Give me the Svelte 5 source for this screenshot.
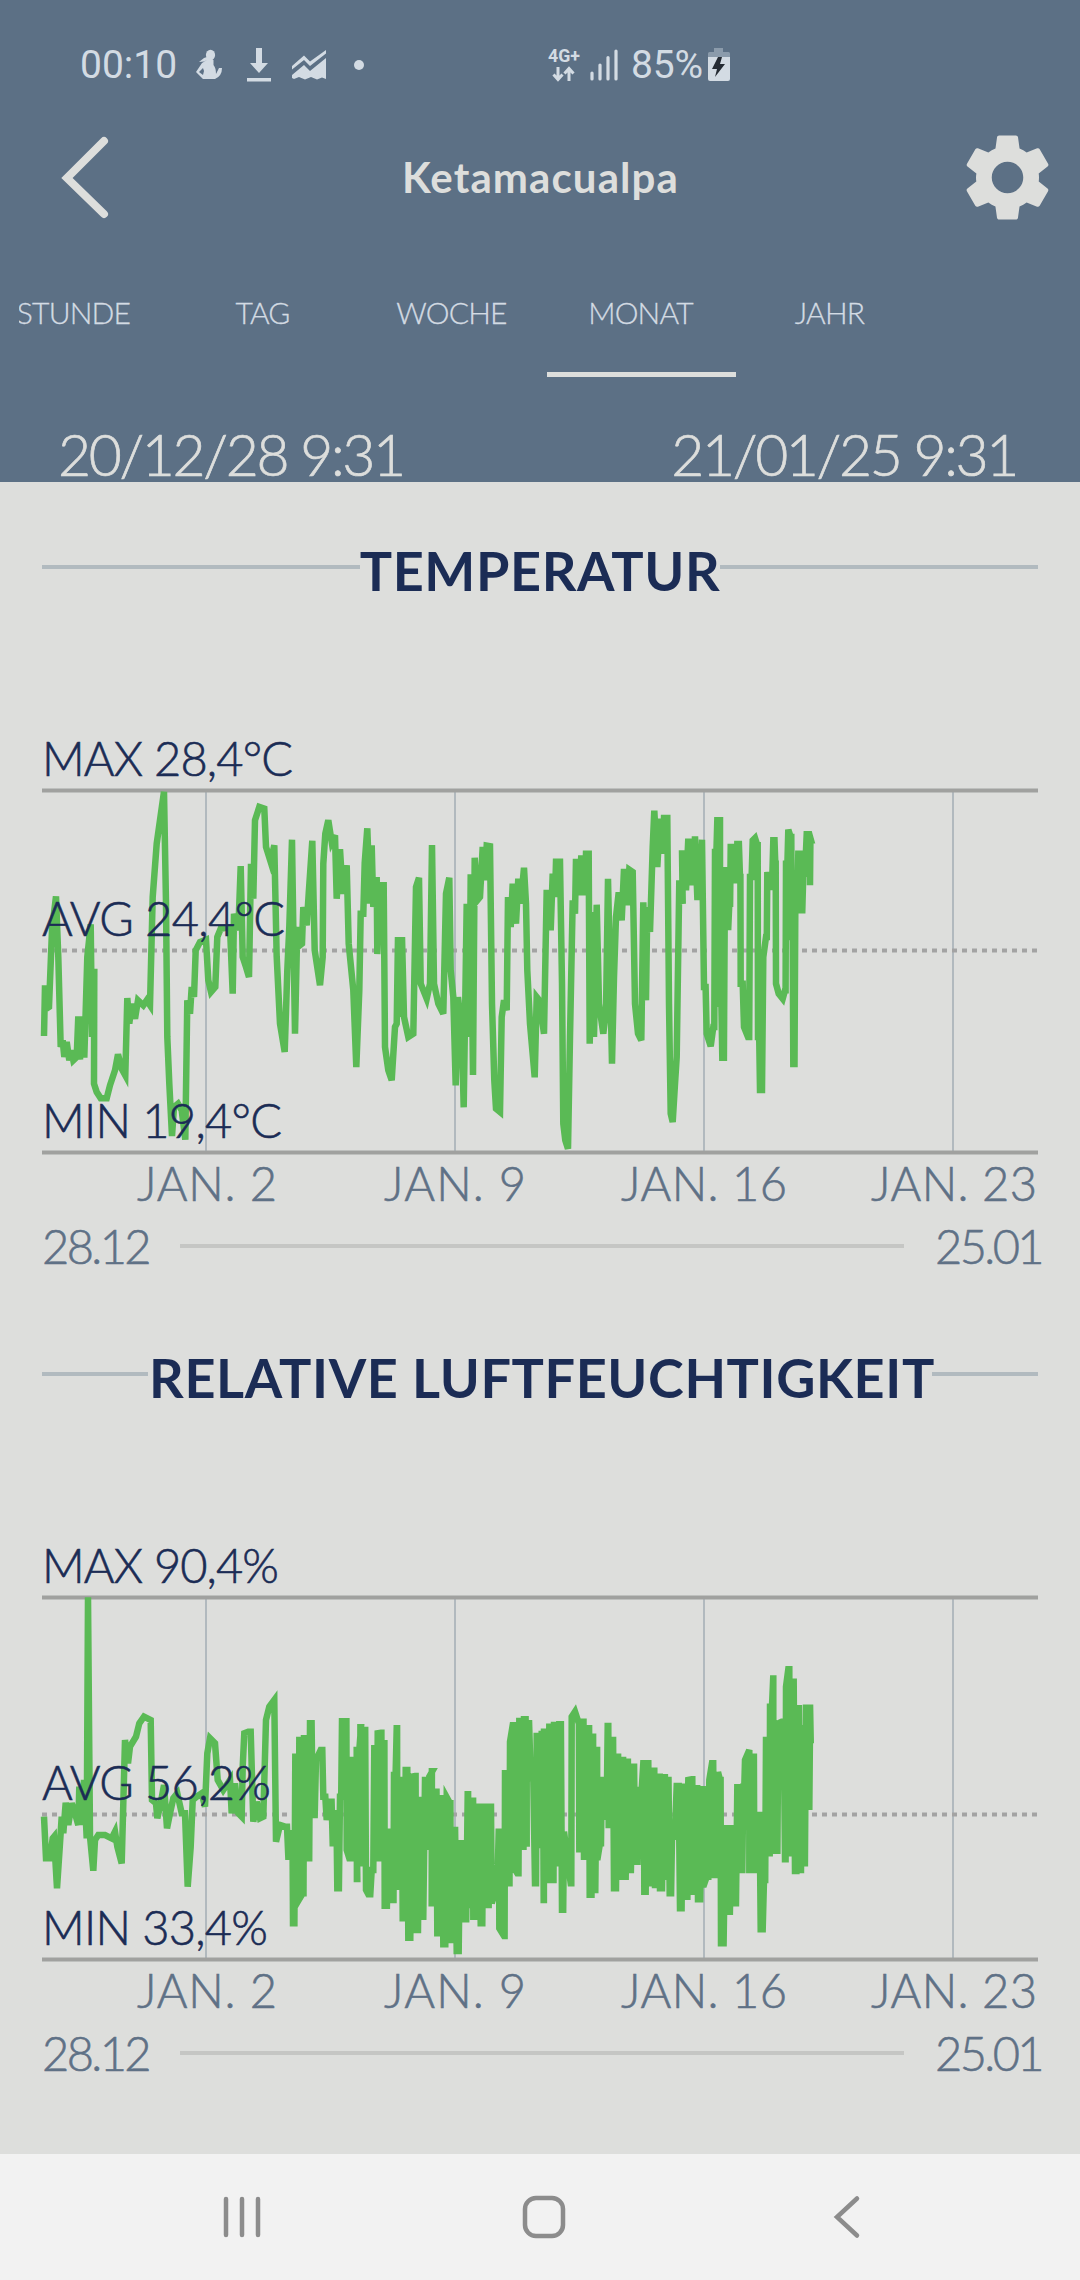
<script lang="ts">
  type Chunk = [offset: number, samples: string];

  interface Label {
    text: string;
    x: number;
    y: number;
    width: number;
  }

  interface Chart {
    title: string;
    kind: string;
    avgY: number;
    labels: Label[];
    points: string;
  }

  const tabs = ["STUNDE", "TAG", "WOCHE", "MONAT", "JAHR"];
  let active = $state("MONAT");

  // Samples are stored in thirds of a pixel, chunk by chunk.
  // After `denseFrom` a value is held for part of the gap before it jumps.
  function trace(chunks: Chunk[], top: number, denseFrom: number) {
    const samples = chunks.flatMap(([offset, list]) =>
      list
        .trim()
        .split(/\s+/)
        .map((pair) => {
          const [x, y] = pair.split(",").map(Number);
          return [(x + offset) / 3, (y - top) / 3];
        })
    );
    const out: number[][] = [];
    samples.forEach(([x, y], i) => {
      out.push([x, y]);
      const next = samples[i + 1];
      if (next && x > denseFrom && Math.abs(next[1] - y) > 20 && next[0] - x < 5) {
        out.push([x + (next[0] - x) * 0.6, y]);
      }
    });
    return out.map(([x, y]) => `${x.toFixed(1)},${y.toFixed(1)}`).join(" ");
  }

  const temperature: Chunk[] = [
    [-36, `42,797 45,645 49,715 57,710 66,480 78,378 85,560 92,830 98,810 103,860 110,815 118,870 124,840
      130,870 140,860 145,738 150,868 157,738 163,862 172,560 182,462 186,800 193,595 192,940 200,965 212,984
      230,984 240,945 255,900 264,852 275,895 286,915 292,683 298,760 305,700 315,745 324,690 340,705 350,690
      360,705 368,380 380,220 402,64 408,400 412,800 418,940 426,1097 432,1010 444,1000 455,1020 466,1108
      472,690 480,730 485,650 492,680 497,540 510,515 528,508 535,630 543,665 556,650 562,500 572,475 600,470
      608,670 612,430 625,480 632,287 638,560 648,590 657,620 663,280 670,385 675,150 688,110 703,115 708,230
      722,275 733,225 740,560 750,760 764,845 772,600 778,470`],
    [714, `36,208 40,470 45,790 52,470 60,525 66,520 70,410 80,465 86,370 97,211 104,540 120,645 128,560
      130,280 136,190 145,150 155,215 165,195 170,385 180,237 188,370 200,285 206,520 220,660 229,890 238,660
      242,430 250,430 254,278 262,174 270,400 275,225 280,410 290,320 292,551 300,345 311,345 315,830 325,900
      335,930 345,770 350,760 354,500 362,740 366,500 372,740 385,800 400,790 408,350 417,322 422,640 440,685
      450,640 456,224 462,640 475,700 490,730 498,370 508,322 512,600 520,680 527,945 534,680 545,780 551,1011
      560,400 568,800 572,312 579,914 584,262 592,390 600,380 608,230 615,330 620,226 630,228 636,700 643,930
      648,1015 660,1025 665,740 672,690 680,720 684,380 692,470 698,340 708,460 715,325 722,400 732,292 738,400
      742,600 750,760 764,921 770,680 778,690 785,740`],
    [1494, `12,790 20,358 32,480 38,310 45,380 48,274 60,274 66,640 70,1060 76,1110 84,1135 90,800 98,390
      105,430 108,265 118,375 124,255 135,375 138,250 146,250 149,820 158,425 162,800 170,403 177,700 190,790
      198,720 204,325 209,560 216,880 222,620 228,440 236,366 245,450 252,296 262,405 268,298 278,305 285,700
      294,790 304,810 310,396 318,690 322,410 330,485 338,230 343,121 352,290 360,145 368,250 372,143 382,143
      387,700 392,1030 398,1055 405,940 410,860 418,330 428,400 426,240 438,360 445,205 458,345 465,198 472,380
      480,380 486,208 492,650 500,790 512,828 520,770 525,245 532,150 540,150 540,700 547,862 555,300 560,470
      568,400 572,230 585,330 592,221 600,320 602,640 612,770 624,800 630,320 638,210 645,203 652,225 654,800
      660,959 670,560 678,500 682,305 690,350 700,210 706,280 708,640 716,670 728,685 735,660 738,280 745,178
      752,200 755,500 760,881 766,420 775,250 782,420 790,310 798,240 800,192 808,192 813,210 810,345`],
  ];

  const humidity: Chunk[] = [
    [-36, `42,710 48,835 60,835 68,775 72,770 81,925 90,790 95,710 100,760 107,668 115,735 125,670 135,700
      145,735 148,620 155,735 162,600 170,775 174,52 180,770 190,872 195,780 205,765 225,765 245,775 255,755
      262,800 275,850 285,480 294,550 300,500 318,470 328,430 342,410 362,420 366,660 378,670 382,715 392,670
      402,615 411,745 420,700 430,655 442,640 455,700 465,700 473,920 482,800 488,660 500,650 515,640 525,680
      532,520 540,475 555,490 563,600 580,630 600,600 605,700 615,610 625,700 635,710 638,560 643,460 655,455
      662,455 670,725 680,665 690,715 700,710 708,420 718,380 733,360 738,785 750,735 765,740 775,830 785,760`],
    [714, `39,1030 46,530 52,955 58,480 62,950 68,940 72,475 80,830 84,835 90,430 98,705 108,540 122,510
      130,650 140,720 150,665 158,790 165,700 172,925 180,650 186,424 192,650 198,424 200,810 208,835 214,540
      222,540 232,897 230,510 243,442 240,850 252,450 258,930 265,943 275,870 283,505 290,835 293,460 303,458
      305,835 312,490 314,977 325,755 338,960 342,585 350,445 352,920 362,600 368,1015 377,570 385,1073 395,590
      405,588 408,1050 418,660 422,1010 435,600 440,800 448,590 457,574 455,970 466,635 472,1060 480,655
      490,1093 500,652 510,670 512,1080 518,750 530,1113 540,790 552,1018 563,643 565,975 578,662 580,1010
      592,680 602,1030 610,680 620,975 630,680 635,970 645,940 656,755 658,1045 672,1068 675,580 686,910
      690,485 698,436 700,860 712,880 718,423 728,800 732,418 740,800 740,430 752,595 765,910 770,468 780,795
      785,462`],
    [1494, `11,960 12,455 22,900 28,440 38,900 42,435 55,850 58,433 66,989 72,755 92,910 95,410 105,395
      115,425 118,808 128,425 132,830 145,445 149,944 158,470 160,930 170,510 172,840 180,790 185,600 195,710
      203,438 206,735 215,480 222,925 232,530 236,890 248,540 250,890 262,545 265,870 278,560 285,845 298,630
      310,550 313,935 320,550 328,910 340,572 345,915 358,590 360,925 370,592 378,890 380,600 389,940 396,770
      410,618 420,985 428,620 438,950 445,600 455,598 458,935 468,625 474,958 485,628 490,920 500,890 508,600
      516,550 522,885 534,576 540,600 543,1090 556,745 562,995 575,745 582,970 592,622 602,870 610,620 615,540
      628,510 628,870 640,530 643,870 654,705 662,1048 672,900 678,480 688,820 690,380 700,286 700,700 708,812
      715,430 725,425 735,838 738,320 745,268 750,820 755,305 765,873 772,385 780,870 785,445 790,850 798,383
      808,383 812,480 808,690`],
  ];

  const gridX = [164, 413, 662, 911];
  const months: Label[] = [
    { text: "JAN. 2", x: 95, y: 450, width: 140 },
    { text: "JAN. 9", x: 342, y: 450, width: 142 },
    { text: "JAN. 16", x: 579, y: 450, width: 166 },
    { text: "JAN. 23", x: 829, y: 450, width: 166 },
  ];

  const charts: Chart[] = [
    {
      title: "TEMPERATUR",
      kind: "temperature",
      avgY: 199.5,
      labels: [
        { text: "MAX 28,4°C", x: 0, y: 25, width: 251 },
        { text: "AVG 24,4°C", x: 0, y: 185, width: 243 },
        { text: "MIN 19,4°C", x: 0, y: 387, width: 240 },
      ],
      points: trace(temperature, -58, 660),
    },
    {
      title: "RELATIVE LUFTFEUCHTIGKEIT",
      kind: "humidity",
      avgY: 256.5,
      labels: [
        { text: "MAX 90,4%", x: 0, y: 25, width: 237 },
        { text: "AVG 56,2%", x: 0, y: 242, width: 229 },
        { text: "MIN 33,4%", x: 0, y: 387, width: 226 },
      ],
      points: trace(humidity, -66, 240),
    },
  ];
</script>

<div class="screen">
  <header>
    <div class="status">
      <span class="clock">00:10</span>
      <svg class="person" width="28" height="32" viewBox="0 0 28 32">
        <ellipse cx="15.500" cy="6" rx="4.600" ry="5.300" />
        <path d="M12 8l-3 1-5 4 5-.5 3-1.500-5 3-6 9 7 7h12q7-3 7-11l-3 0-3 6q0-6-2.500-9v-5z" />
        <path d="M8 19l-4 4 4 3 1-4z" fill="#5c7085" />
      </svg>
      <svg class="download" width="26" height="34" viewBox="0 0 26 34">
        <path d="M10 0h6v15h6l-9 10-9-10h6zM1 30h24v3.500H1z" />
      </svg>
      <svg class="graph" width="34" height="30" viewBox="0 0 34 30">
        <path d="M0 16L12 5.500l6 6L34 0v3.500L18 16l-6-6L0 19.500z" />
        <path d="M0 25l12-10 6 6L34 8v21l-4-1.500-5 2-6-2.500-6 2.500-6-2.500-5 2-2-1z" />
      </svg>
      <span class="dot"></span>
      <svg class="network" width="32" height="34" viewBox="0 0 32 34">
        <text x="0" y="14" textLength="32" lengthAdjust="spacingAndGlyphs">4G+</text>
        <path d="M10 19v12M5.500 26.500L10 31.500l4.500-5M21 33V21M16.500 25.500L21 20.500l4.500 5" fill="none" stroke="currentColor" stroke-width="3" />
      </svg>
      <svg class="signal" width="28" height="32" viewBox="0 0 28 32">
        <path d="M2 24v6M10 16v14M18 8.500V30M26 2v28" fill="none" stroke="currentColor" stroke-width="3.200" stroke-linecap="round" />
      </svg>
      <span class="percent">85%</span>
      <svg class="battery" width="22" height="34" viewBox="0 0 22 34">
        <path d="M6 0h9v4h5.500q1.500 0 1.500 1.500V10H0V5.500Q0 4 1.500 4H6z" opacity=".4" />
        <path d="M0 9h22v22q0 2-2 2H2q-2 0-2-2z" />
        <path d="M10 9L4 21h5L7 29l10-13h-5l2-7z" fill="#252b33" />
      </svg>
    </div>

    <div class="titlebar">
      <button class="back" type="button" aria-label="Zurück">
        <svg width="54" height="86" viewBox="0 0 54 86">
          <path d="M46 7L9 44l37 36" fill="none" stroke="currentColor" stroke-width="8" stroke-linecap="round" />
        </svg>
      </button>
      <h1>Ketamacualpa</h1>
      <button class="settings" type="button" aria-label="Einstellungen">
        <svg width="105" height="105" viewBox="0 0 24 24">
          <path d="M19.140 12.940c.04-.3.06-.61.06-.94 0-.32-.02-.64-.07-.94l2.030-1.580a.49.49 0 0 0 .12-.61l-1.920-3.320a.488.488 0 0 0-.59-.22l-2.390.96c-.5-.38-1.030-.7-1.620-.94l-.36-2.540a.484.484 0 0 0-.48-.41h-3.840c-.24 0-.43.17-.47.41l-.36 2.540c-.59.24-1.130.57-1.620.94l-2.390-.96c-.22-.08-.47 0-.59.22L2.740 8.870c-.12.21-.08.47.12.61l2.030 1.580c-.05.3-.09.63-.09.94s.02.64.07.94l-2.030 1.580a.49.49 0 0 0-.12.61l1.920 3.320c.12.22.37.29.59.22l2.390-.96c.5.38 1.030.7 1.620.94l.36 2.540c.05.24.24.41.48.41h3.840c.24 0 .44-.17.47-.41l.36-2.540c.59-.24 1.130-.56 1.620-.94l2.390.96c.22.08.47 0 .59-.22l1.920-3.320c.12-.22.07-.47-.12-.61zM12 15.600c-1.980 0-3.600-1.620-3.600-3.600s1.620-3.600 3.600-3.600 3.600 1.620 3.600 3.600-1.620 3.600-3.600 3.600z" />
        </svg>
      </button>
    </div>

    <nav class="tabs">
      {#each tabs as tab}
        <button class="tab" class:active={tab === active} onclick={() => (active = tab)} type="button">{tab}</button>
      {/each}
    </nav>

    <div class="period">
      <span>20/12/28 9:31</span>
      <span>21/01/25 9:31</span>
    </div>
  </header>

  <main>
    {#each charts as chart}
      <section class={chart.kind}>
        <h2><span>{chart.title}</span></h2>

        <svg class="chart" width="996" height="464" viewBox="0 -10 996 464">
          {#each gridX as x}
            <line class="grid" x1={x} x2={x} y1="39" y2="401" />
          {/each}
          <line class="axis" x1="0" x2="996" y1="39.500" y2="39.500" />
          <line class="axis" x1="0" x2="996" y1="401.500" y2="401.500" />
          <line class="avg" x1="0" x2="996" y1={chart.avgY} y2={chart.avgY} />
          <polyline points={chart.points} />
          {#each chart.labels as l}
            <text class="value" x={l.x} y={l.y} textLength={l.width}>{l.text}</text>
          {/each}
          {#each months as m}
            <text class="month" x={m.x} y={m.y} textLength={m.width}>{m.text}</text>
          {/each}
        </svg>

        <div class="range">
          <span class="from">28.12</span>
          <span class="track"></span>
          <span class="to">25.01</span>
        </div>
      </section>
    {/each}
  </main>

  <footer>
    <svg width="40" height="44" viewBox="0 0 40 44">
      <path d="M4 4v36M20 4v36M36 4v36" />
    </svg>
    <svg class="home" width="44" height="44" viewBox="0 0 44 44">
      <rect x="3" y="3" width="38" height="38" rx="11" />
    </svg>
    <svg class="return" width="30" height="44" viewBox="0 0 30 44">
      <path d="M25 3.500L5 22l20 18.500" />
    </svg>
  </footer>
</div>

<style>
  :global(body) {
    margin: 0;
    background: #dddedc;
  }

  .screen {
    width: 1080px;
    height: 2280px;
    display: flex;
    flex-direction: column;
    overflow: hidden;
    background: #dddedc;
    font-family: Lato, "Open Sans", sans-serif;
    font-weight: 300;
  }

  button {
    padding: 0;
    border: 0;
    background: none;
    color: inherit;
    font: inherit;
    cursor: pointer;
  }

  svg {
    display: block;
    flex-shrink: 0;
    overflow: visible;
    fill: currentColor;
  }

  header {
    height: 482px;
    flex-shrink: 0;
    background: #5c7085;
    color: #dddedc;
  }

  .status {
    height: 110px;
    padding: 20px 0 0 80px;
    box-sizing: border-box;
    display: flex;
    align-items: center;
    color: #d3dbe3;
    font-family: Roboto, sans-serif;
    font-weight: 400;
    font-size: 39px;
  }

  .clock {
    width: 115px;
  }

  .download {
    margin-left: 23px;
  }

  .graph {
    margin-left: 20px;
  }

  .dot {
    width: 10px;
    height: 10px;
    margin-left: 28px;
    border-radius: 50%;
    background: currentColor;
  }

  .network {
    margin-left: 184px;
    font-size: 18px;
    font-weight: 700;
  }

  .signal {
    margin-left: 10px;
  }

  .percent {
    width: 77px;
    margin-left: 13px;
    letter-spacing: -0.200px;
  }

  .titlebar {
    height: 134px;
    padding: 0 20px 2px 58px;
    display: flex;
    align-items: center;
  }

  .back {
    width: 105px;
  }

  h1 {
    flex: 1;
    margin: 0 37px 0 0;
    font-size: 42px;
    font-weight: 700;
    line-height: 1;
    letter-spacing: 1.100px;
    text-align: center;
  }

  .tabs {
    height: 131px;
    display: flex;
    margin-left: 19px;
    overflow: hidden;
  }

  .tab {
    width: 189px;
    flex-shrink: 0;
    padding: 5px 2px 0 0;
    border-bottom: 5px solid transparent;
    color: #d3dbe3;
    font-size: 30px;
    letter-spacing: -0.800px;
    -webkit-text-stroke: 0.300px currentColor;
  }

  .tab:first-child {
    margin-left: -39px;
  }

  .tab.active {
    border-bottom-color: #dddedc;
  }

  .period {
    height: 105px;
    padding: 43px 63px 0 58px;
    box-sizing: border-box;
    display: flex;
    justify-content: space-between;
    font-size: 57px;
    line-height: 68px;
    letter-spacing: -2.350px;
    -webkit-text-stroke: 0.700px currentColor;
  }

  main {
    flex: 1;
    padding: 0 42px;
  }

  section {
    height: 807px;
    color: #5f7186;
    font-size: 47px;
  }

  h2 {
    height: 80px;
    margin: 0;
    padding-top: 49px;
    display: flex;
    align-items: center;
    color: #1b2c55;
    font-size: 54px;
    font-weight: 700;
    line-height: 80px;
    letter-spacing: 0.600px;
    white-space: nowrap;
  }

  h2::before,
  h2::after {
    content: "";
    flex: 1;
    height: 4px;
    margin-bottom: 8px;
    background: #b1babf;
  }

  .humidity h2 span {
    margin-right: -3px;
    padding-left: 1px;
  }

  .chart {
    margin-top: 130px;
  }

  .grid {
    stroke: #b1b9be;
    stroke-width: 2;
  }

  .axis {
    stroke: #a0a19f;
    stroke-width: 4;
  }

  .avg {
    stroke: #a3a3a3;
    stroke-width: 4;
    stroke-dasharray: 5 5;
  }

  polyline {
    fill: none;
    stroke: #5aba55;
    stroke-width: 6.500;
  }

  .value,
  .month {
    stroke: currentColor;
    stroke-width: 0.600;
  }

  .value {
    color: #1b2c55;
  }

  .range {
    display: flex;
    align-items: center;
    margin-top: 16px;
    line-height: 50px;
    letter-spacing: -2.600px;
    white-space: nowrap;
    -webkit-text-stroke: 0.600px currentColor;
  }

  .from {
    width: 138px;
    flex-shrink: 0;
  }

  .track {
    width: 724px;
    height: 4px;
    flex-shrink: 0;
    background: #c5c6c4;
  }

  .to {
    padding-left: 31px;
  }

  footer {
    height: 126px;
    flex-shrink: 0;
    padding-left: 222px;
    display: flex;
    align-items: center;
    background: #f2f2f2;
    color: #8c8c8c;
  }

  footer svg {
    fill: none;
    stroke: currentColor;
    stroke-width: 4.500;
    stroke-linecap: round;
  }

  .home {
    margin-left: 260px;
  }

  .return {
    margin-left: 266px;
  }
</style>
